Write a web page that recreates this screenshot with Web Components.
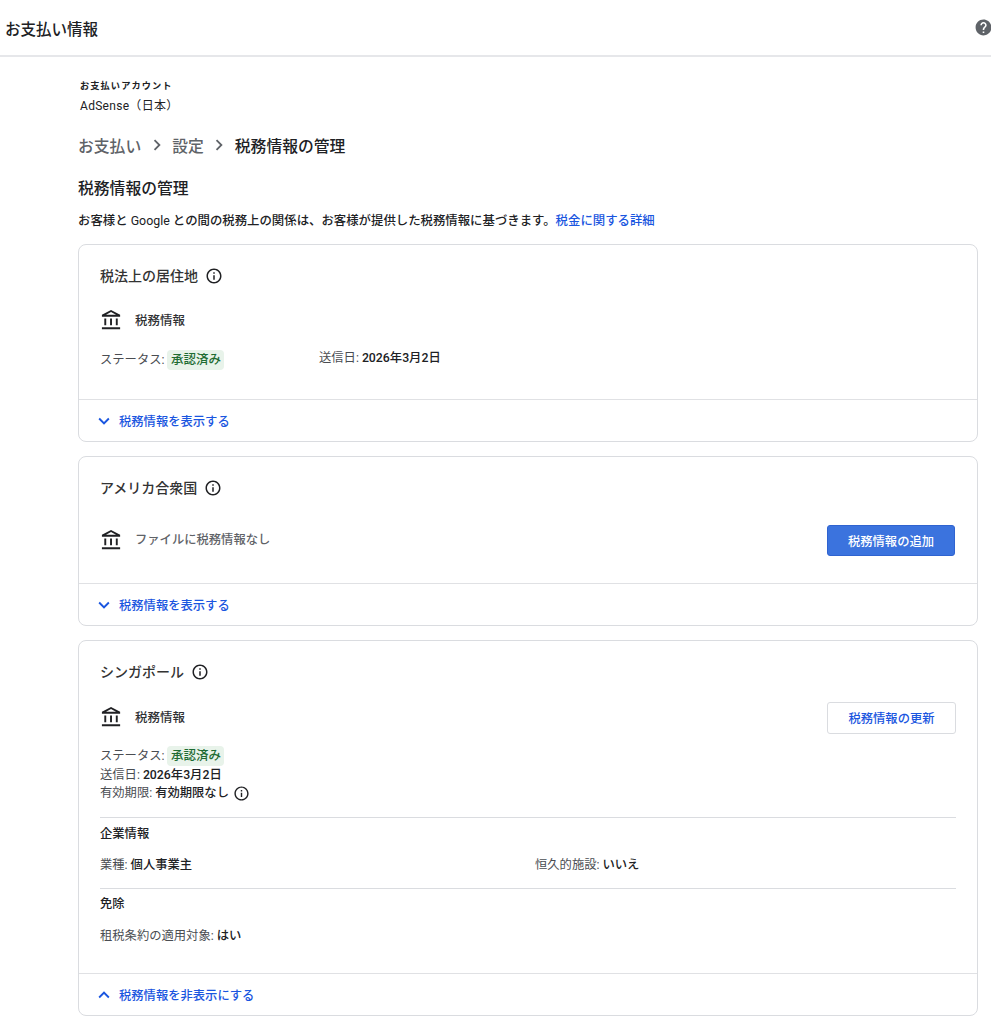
<!DOCTYPE html>
<html lang="ja">
<head>
<meta charset="utf-8">
<title>お支払い情報</title>
<style>
  html, body { margin: 0; background: #fff; overflow: hidden; }
  body {
    font-family: Roboto, "Noto Sans CJK JP", "Noto Sans", sans-serif;
    color: #202124;
    font-size: 12px;
  }
</style>
</head>
<body>
<pay-header heading="お支払い情報"></pay-header>
<pay-page>
  <account-block label="お支払いアカウント" name="AdSense（日本）"></account-block>
  <bread-crumbs>
    <span>お支払い</span>
    <span>設定</span>
    <span class="current">税務情報の管理</span>
  </bread-crumbs>
  <page-intro heading="税務情報の管理" link="税金に関する詳細">お客様と <span style="font-weight:400">Google</span> との間の税務上の関係は、お客様が提供した税務情報に基づきます。</page-intro>

  <tax-card heading="税法上の居住地" toggle="税務情報を表示する" style="--body-pad:29px">
    <bank-row label="税務情報" style="margin-top:18px"></bank-row>
    <div style="display:grid;grid-template-columns:219px 1fr;align-items:center;margin-top:14px">
      <kv-line key="ステータス"><status-chip>承認済み</status-chip></kv-line>
      <kv-line key="送信日" style="margin-top:-4px">2026年3月2日</kv-line>
    </div>
  </tax-card>

  <tax-card heading="アメリカ合衆国" toggle="税務情報を表示する" style="--body-pad:26px">
    <bank-row label="ファイルに税務情報なし" muted style="margin-top:27px;--lab-up:4px;--icon-up:2px"><action-button primary>税務情報の追加</action-button></bank-row>
  </tax-card>

  <tax-card heading="シンガポール" toggle="税務情報を非表示にする" open style="--body-pad:28px">
    <bank-row label="税務情報" style="margin-top:20px;--lab-up:4px;--icon-up:2px"><action-button>税務情報の更新</action-button></bank-row>
    <div style="display:flex;flex-direction:column;margin-top:12px">
      <kv-line key="ステータス"><status-chip>承認済み</status-chip></kv-line>
      <kv-line key="送信日">2026年3月2日</kv-line>
      <kv-line key="有効期限"><b>有効期限なし</b><info-icon size="17" style="margin-left:4px"></info-icon></kv-line>
      <info-section heading="企業情報" gap="13" style="margin-top:15px;--head-top:7px">
        <div style="display:grid;grid-template-columns:435px 1fr">
          <kv-line key="業種"><b>個人事業主</b></kv-line>
          <kv-line key="恒久的施設"><b>いいえ</b></kv-line>
        </div>
      </info-section>
      <info-section heading="免除" gap="14" style="margin-top:14px;--head-top:6px">
        <kv-line key="租税条約の適用対象"><b>はい</b></kv-line>
      </info-section>
    </div>
  </tax-card>
</pay-page>

<script>
const ICONS = {
  info: 'M11 7h2v2h-2zm0 4h2v6h-2zm1-9C6.48 2 2 6.48 2 12s4.48 10 10 10 10-4.48 10-10S17.52 2 12 2zm0 18c-4.41 0-8-3.59-8-8s3.59-8 8-8 8 3.59 8 8-3.59 8-8 8z',
  help: 'M12 2C6.48 2 2 6.48 2 12s4.48 10 10 10 10-4.48 10-10S17.52 2 12 2zm1 17h-2v-2h2v2zm2.07-7.75l-.9.92C13.45 12.9 13 13.5 13 15h-2v-.5c0-1.1.45-2.1 1.17-2.83l1.24-1.26c.37-.36.59-.86.59-1.41 0-1.1-.9-2-2-2s-2 .9-2 2H8c0-2.21 1.79-4 4-4s4 1.79 4 4c0 .88-.36 1.68-.93 2.25z',
  bank: 'M6.5 10h-2v7h2v-7zm6 0h-2v7h2v-7zm8.5 9H2v2h19v-2zm-2.5-9h-2v7h2v-7zm-7-6.74L16.71 6H6.29l5.21-2.74m0-2.26L2 6v2h19V6l-9.5-5z',
  down: 'M16.59 8.59L12 13.17 7.41 8.59 6 10l6 6 6-6z',
  up: 'M12 8l-6 6 1.41 1.41L12 10.83l4.59 4.58L18 14z',
  right: 'M10 6L8.59 7.41 13.17 12l-4.58 4.59L10 18l6-6z'
};
const svgIcon = (name, size, color) =>
  `<svg width="${size}" height="${size}" viewBox="0 0 24 24" fill="${color}" style="display:block;flex:none"><path d="${ICONS[name]}"/></svg>`;

// base class: subclasses just give back their shadow markup
class ShadowEl extends HTMLElement {
  constructor() {
    super();
    this.attachShadow({ mode: 'open' });
  }
  connectedCallback() {
    this.shadowRoot.innerHTML = this.markup();
  }
}

class PayHeader extends ShadowEl {
  markup() {
    return `
      <style>
        :host { display: flex; align-items: center; justify-content: space-between; height: 55px; border-bottom: 2px solid #e6e7ea; padding-left: 5px; overflow: hidden; }
        h1 { margin: 0; font-size: 15.5px; font-weight: 500; color: #202124; }
        .help { margin-right: -2px; }
      </style>
      <h1>${this.getAttribute('heading')}</h1>
      <div class="help">${svgIcon('help', 19, '#5f6368')}</div>`;
  }
}

class PayPage extends ShadowEl {
  markup() {
    return `
      <style>
        :host { display: block; padding: 21px 13px 0 78px; }
      </style>
      <slot></slot>`;
  }
}

class AccountBlock extends ShadowEl {
  markup() {
    return `
      <style>
        :host { display: block; padding-left: 2px; line-height: 16px; }
        .label { font-size: 9.2px; font-weight: 700; letter-spacing: 1.1px; color: #202124; height: 16px; }
        .name { font-size: 12px; margin-top: 4px; letter-spacing: 0.3px; color: #202124; }
      </style>
      <div class="label">${this.getAttribute('label')}</div>
      <div class="name">${this.getAttribute('name')}</div>`;
  }
}

class BreadCrumbs extends ShadowEl {
  connectedCallback() {
    // chevrons go between the slotted items
    const items = [...this.children];
    items.forEach((el, i) => {
      el.style.fontWeight = '500';
      el.style.color = el.classList.contains('current') ? '#202124' : '#5f6368';
      el.slot = 's' + i;
    });
    this.shadowRoot.innerHTML = `
      <style>
        :host { display: flex; align-items: center; margin-top: 20px; height: 22px; font-size: 15.8px; }
        .sep { margin: 0 4.5px; }
      </style>
      ${items.map((_, i) => (i ? `<span class="sep">${svgIcon('right', 22, '#5f6368')}</span>` : '') + `<slot name="s${i}"></slot>`).join('')}`;
  }
}

class PageIntro extends ShadowEl {
  markup() {
    return `
      <style>
        :host { display: block; margin-bottom: 14px; }
        h2 { margin: 22px 0 0; font-size: 15.8px; line-height: 22px; font-weight: 500; color: #202124; }
        p { margin: 12px 0 0; font-size: 12.4px; line-height: 18px; font-weight: 500; color: #202124; height: 18px; white-space: nowrap; }
        a { color: #1a56e0; text-decoration: none; }
      </style>
      <h2>${this.getAttribute('heading')}</h2>
      <p><slot></slot><a href="#">${this.getAttribute('link')}</a></p>`;
  }
}

class TaxCard extends ShadowEl {
  markup() {
    const open = this.hasAttribute('open');
    return `
      <style>
        :host { display: block; border: 1px solid #dadce0; border-radius: 8px; background: #fff; margin-bottom: 14px; }
        .body { padding: 21px 21px var(--body-pad); }
        .title { display: flex; align-items: center; gap: 7px; height: 20px; font-size: 14px; font-weight: 500; color: #333; }
        .title span { margin-bottom: 2px; }
        .foot { display: flex; align-items: center; gap: 4px; height: 41px; padding-left: 14px; border-top: 1px solid #e0e1e4; font-size: 12.3px; font-weight: 500; color: #1a56e0; }
      </style>
      <div class="body">
        <div class="title"><span>${this.getAttribute('heading')}</span><info-icon size="18"></info-icon></div>
        <slot></slot>
      </div>
      <div class="foot">${svgIcon(open ? 'up' : 'down', 22, '#1a56e0')}<span>${this.getAttribute('toggle')}</span></div>`;
  }
}

class InfoIcon extends ShadowEl {
  markup() {
    return `
      <style>:host { display: inline-block; vertical-align: middle; flex: none; }</style>
      ${svgIcon('info', this.getAttribute('size') || 18, '#202124')}`;
  }
}

class BankRow extends ShadowEl {
  markup() {
    const muted = this.hasAttribute('muted');
    return `
      <style>
        :host { display: flex; align-items: center; height: 32px; font-size: 12.5px; font-weight: 500; }
        .ico { margin-bottom: var(--icon-up, 0); }
        .lab { margin-left: 12px; margin-bottom: var(--lab-up, 2px); flex: 1; font-size: ${muted ? '12.3px' : '12.5px'}; color: ${muted ? '#5f6368' : '#2f3134'}; }
      </style>
      <span class="ico">${svgIcon('bank', 23, '#202124')}</span>
      <span class="lab">${this.getAttribute('label')}</span>
      <slot></slot>`;
  }
}

class KvLine extends ShadowEl {
  markup() {
    return `
      <style>
        :host { display: flex; align-items: center; font-size: 12.3px; line-height: 18px; white-space: nowrap; color: #202124; font-weight: 500; }
        .k { color: #4a4d52; font-weight: 400; margin-right: 3px; }
        ::slotted(b) { font-weight: 500; color: #202124; }
      </style>
      <span class="k">${this.getAttribute('key')}:</span><slot></slot>`;
  }
}

class StatusChip extends ShadowEl {
  markup() {
    return `
      <style>
        :host { display: inline-block; background: #e8f3ea; color: #1e6b32; border-radius: 4px; padding: 0 3.5px; font-size: 12.5px; line-height: 20px; font-weight: 500; }
      </style>
      <slot></slot>`;
  }
}

class ActionButton extends ShadowEl {
  markup() {
    const primary = this.hasAttribute('primary');
    return `
      <style>
        :host { display: flex; align-items: center; justify-content: center; width: ${primary ? 128 : 129}px; height: ${primary ? 31 : 32}px; margin: 0 ${primary ? 1 : 0}px ${primary ? 1 : 0}px 0; box-sizing: border-box; border-radius: 3px; font-size: 12.3px; font-weight: 500; flex: none;
          border: 1px solid ${primary ? '#2f63d0' : '#dadce0'};
          background: ${primary ? '#3b73de' : '#fff'};
          color: ${primary ? '#fff' : '#1a56e0'}; }
      </style>
      <slot></slot>`;
  }
}

class InfoSection extends ShadowEl {
  markup() {
    return `
      <style>
        :host { display: block; border-top: 1px solid #dadce0; }
        h3 { margin: var(--head-top) 0 0; font-size: 12.3px; line-height: 18px; font-weight: 500; color: #202124; }
        .in { margin-top: ${this.getAttribute('gap')}px; }
      </style>
      <h3>${this.getAttribute('heading')}</h3>
      <div class="in"><slot></slot></div>`;
  }
}

customElements.define('pay-header', PayHeader);
customElements.define('pay-page', PayPage);
customElements.define('account-block', AccountBlock);
customElements.define('bread-crumbs', BreadCrumbs);
customElements.define('page-intro', PageIntro);
customElements.define('tax-card', TaxCard);
customElements.define('info-icon', InfoIcon);
customElements.define('bank-row', BankRow);
customElements.define('kv-line', KvLine);
customElements.define('status-chip', StatusChip);
customElements.define('action-button', ActionButton);
customElements.define('info-section', InfoSection);
</script>
</body>
</html>
